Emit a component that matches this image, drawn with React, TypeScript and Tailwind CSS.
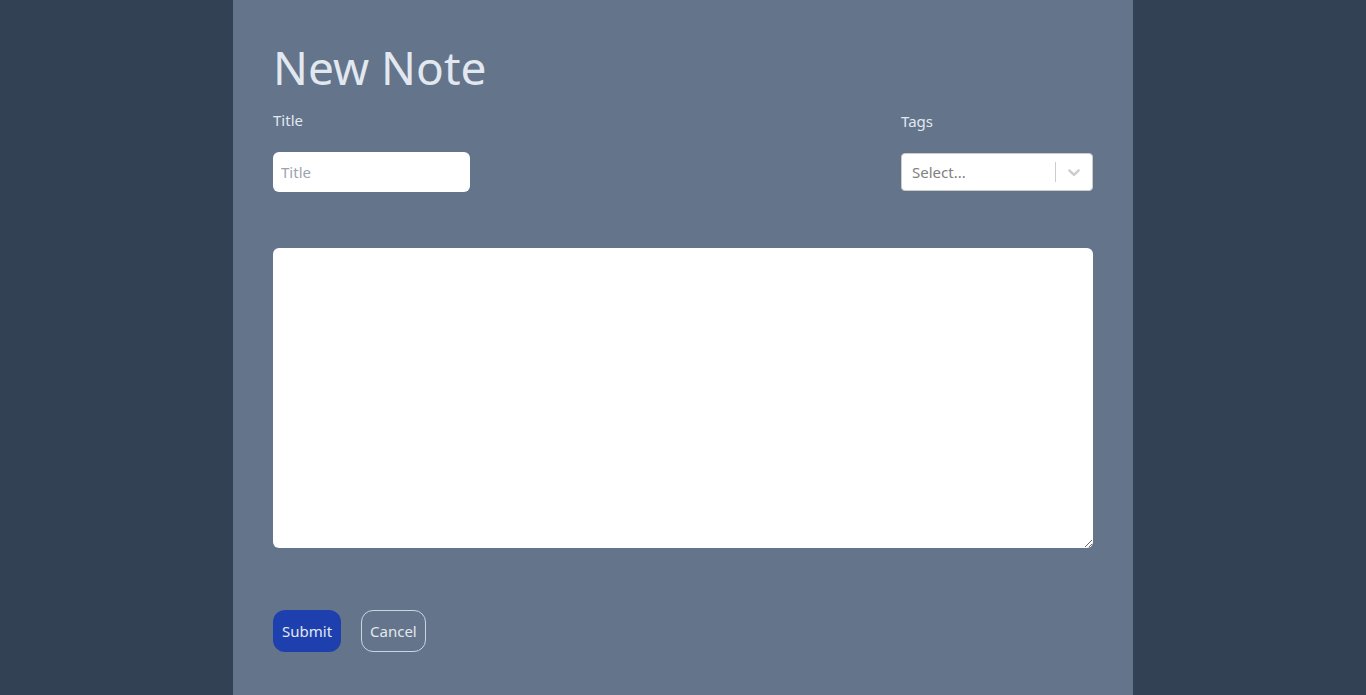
import React from "react";

export default function App() {
  return (
    <div className="min-h-screen bg-[#334155] flex justify-center" style={{ fontFamily: '"Noto Sans", "Open Sans", sans-serif' }}>
      <div className="w-[900px] min-h-screen bg-[#64748b] px-10 pt-[40px] text-[#e2e8f0]">
        <h1 className="text-[46px] leading-[54px] font-normal">New Note</h1>
        <div className="flex justify-between mt-[16px]">
          <div className="flex flex-col">
            <label className="text-[15px] leading-5 mb-[22px]">Title</label>
            <input
              placeholder="Title"
              className="w-[197px] h-10 rounded-md bg-white px-2 text-[15px] text-gray-800 placeholder:text-[#9ca3af] outline-none"
            />
          </div>
          <div className="flex flex-col">
            <label className="text-[15px] leading-5 mt-[1px] mb-[22px]">Tags</label>
            <div className="w-[192px] h-[38px] bg-white border border-[#cccccc] rounded-[4px] flex items-center">
              <span className="flex-1 pl-[10px] text-[15px] text-[#808080]">Select...</span>
              <span className="w-px h-5 bg-[#cccccc]" />
              <span className="w-9 flex justify-center text-[#cccccc]">
                <svg width="20" height="20" viewBox="0 0 20 20" fill="currentColor">
                  <path d="M4.516 7.548c0.436-0.446 1.043-0.481 1.576 0l3.908 3.747 3.908-3.747c0.533-0.481 1.141-0.446 1.574 0 0.436 0.445 0.408 1.197 0 1.615-0.406 0.418-4.695 4.502-4.695 4.502-0.217 0.223-0.502 0.335-0.787 0.335s-0.57-0.112-0.789-0.335c0 0-4.287-4.084-4.695-4.502s-0.436-1.170 0-1.615z" />
                </svg>
              </span>
            </div>
          </div>
        </div>
        <textarea className="block mt-[56px] w-full h-[300px] rounded-md bg-white text-gray-800 outline-none p-2" />
        <div className="flex gap-5 mt-[62px]">
          <button className="h-[42px] px-[9px] rounded-xl bg-[#1e40af] text-[15px] text-[#e2e8f0]">Submit</button>
          <button className="h-[42px] px-2 rounded-xl border border-[#cbd5e1] text-[15px] text-[#e2e8f0]">Cancel</button>
        </div>
      </div>
    </div>
  );
}
